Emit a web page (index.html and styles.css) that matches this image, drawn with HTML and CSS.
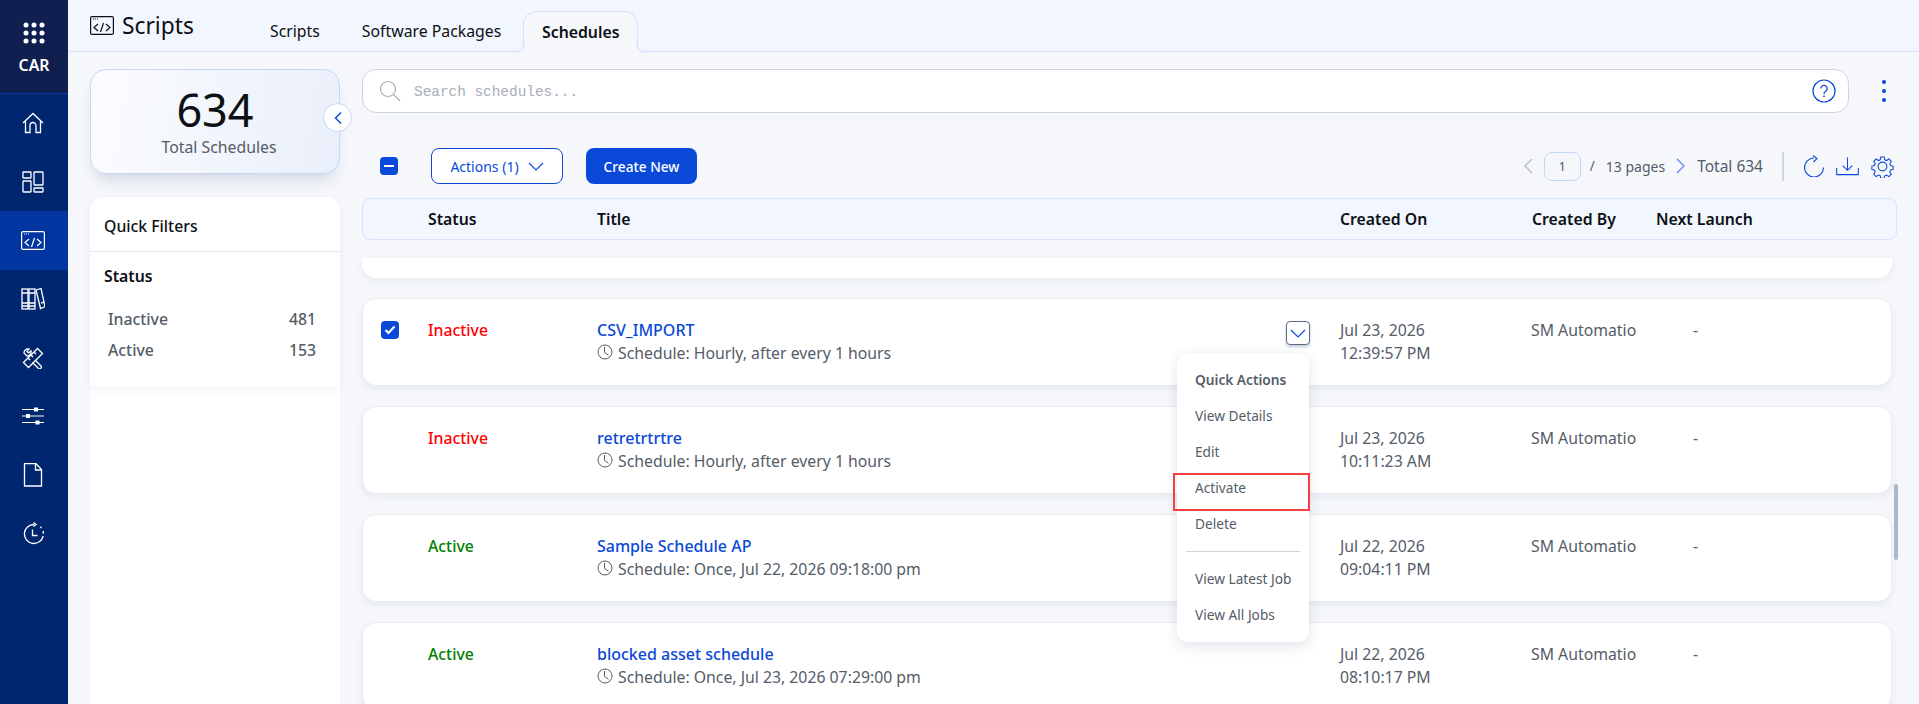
FILE: index.html
```html
<!DOCTYPE html>
<html lang="en">
<head>
  <meta charset="UTF-8" />
  <title>Scripts - Schedules</title>
  <link rel="stylesheet" href="styles.css">
</head>
<body>

<svg class="defs" width="0" height="0">
  <symbol id="code" viewBox="0 0 24 19">
    <rect x="0.6" y="0.6" width="22.8" height="17.8" rx="1.5" fill="none" stroke="currentColor" stroke-width="1.2"/>
    <path d="M3 3h1M5 3h1M7 3h1" stroke="currentColor" stroke-width="1"/>
    <path d="M8 8l-4 3.5 4 3.500M16 8l4 3.500-4 3.500M13.500 7l-3 9" fill="none" stroke="currentColor" stroke-width="1.200"/>
  </symbol>
  <symbol id="clock" viewBox="0 0 16 16">
    <circle cx="8" cy="8" r="7" fill="none" stroke="currentColor" stroke-width="1"/>
    <path d="M7.500 3v5.300l4 3" fill="none" stroke="currentColor" stroke-width="1"/>
  </symbol>
</svg>

<!-- sidebar -->
<aside class="sidebar">
  <div class="brand">
    <svg class="grid-dots" width="22" height="22" viewBox="0 0 22 22" fill="#fff">
      <circle cx="3" cy="3" r="2.500"/><circle cx="11" cy="3" r="2.500"/><circle cx="19" cy="3" r="2.500"/>
      <circle cx="3" cy="11" r="2.500"/><circle cx="11" cy="11" r="2.500"/><circle cx="19" cy="11" r="2.500"/>
      <circle cx="3" cy="19" r="2.500"/><circle cx="11" cy="19" r="2.500"/><circle cx="19" cy="19" r="2.500"/>
    </svg>
    <span>CAR</span>
  </div>
  <nav>
    <div class="nav-item">
      <svg width="22" height="22" viewBox="0 0 22 22" fill="none" stroke="#fff" stroke-width="1.300"><path d="M1 11L11 1.500 21 11M3.500 9.500V20.500H8V13.500a3 3 0 0 1 6 0V20.500H18.500V9.500"/></svg>
    </div>
    <div class="nav-item">
      <svg width="22" height="22" viewBox="0 0 22 22" fill="none" stroke="#fff" stroke-width="1.300"><rect x="1" y="1" width="8" height="6" rx=".5"/><rect x="1" y="10" width="8" height="11" rx=".5"/><rect x="12" y="1" width="9" height="13" rx=".5"/><rect x="12" y="17" width="9" height="4" rx=".5"/></svg>
    </div>
    <div class="nav-item active">
      <svg width="24" height="19"><use href="#code"/></svg>
    </div>
    <div class="nav-item">
      <svg width="24" height="22" viewBox="0 0 24 22" fill="none" stroke="#fff" stroke-width="1.300"><rect x="1" y="1" width="6" height="20"/><rect x="8" y="1" width="6" height="20"/><path d="M15 2l5-1.500 4 18-4.500 2zM1 5h6M8 5h6M1 15h6M8 15h6M1 18h6M8 18h6M20 15l3-.8"/></svg>
    </div>
    <div class="nav-item">
      <svg width="22" height="22" viewBox="0 0 22 22" fill="none" stroke="#fff" stroke-width="1.300"><path d="M1.500 15.500L15.500 1.500l5 5-14 14zM12 5l2 2M9 8l2 2M6 11l2 2"/><path d="M2 6a4 4 0 0 1 5-4L5 4.500l1.500 1.500L9 4a4 4 0 0 1-4 5zM13 13l6 6a1.800 1.800 0 0 1-2.500 2.500l-6-6"/></svg>
    </div>
    <div class="nav-item">
      <svg width="22" height="18" viewBox="0 0 22 18" fill="#fff"><path d="M0 2h22v1H0zM0 8.500h22v1H0zM0 15h22v1H0z"/><rect x="12" y="0.500" width="4" height="4"/><rect x="4" y="7" width="4" height="4"/><rect x="13.500" y="13.500" width="4" height="4"/></svg>
    </div>
    <div class="nav-item">
      <svg width="20" height="24" viewBox="0 0 20 24" fill="none" stroke="#fff" stroke-width="1.300"><path d="M1.500 .7H13L18.500 6.500V23H1.500zM12.500 1V7H18.500"/></svg>
    </div>
    <div class="nav-item">
      <svg width="22" height="23" viewBox="0 0 22 23" fill="none" stroke="#fff" stroke-width="1.300"><path d="M12 2.500a9.500 9.500 0 1 0 9.200 11.500M11.500 .5l2.500 2-2.500 2"/><path d="M21.300 9v2.800M18.300 4.800l1.200 1.200"/><path d="M10.500 7.500v6h5"/></svg>
    </div>
  </nav>
</aside>

<main class="main">
  <header class="topbar">
    <div class="page-title">
      <svg width="24" height="19"><use href="#code"/></svg>
      <h1>Scripts</h1>
    </div>
    <div class="tabs">
      <div class="tab">Scripts</div>
      <div class="tab">Software Packages</div>
      <div class="tab selected">Schedules</div>
    </div>
  </header>

  <div class="content">
    <!-- left column -->
    <section class="left">
      <div class="total-card">
        <div class="total-num">634</div>
        <div class="total-label">Total Schedules</div>
        <button class="collapse">
          <svg width="10" height="14" viewBox="0 0 10 14" fill="none" stroke="#0a49d8" stroke-width="1.500"><path d="M8 1.500L2.500 7 8 12.500"/></svg>
        </button>
      </div>
      <div class="filters">
        <div class="filters-box">
          <div class="filters-head">Quick Filters</div>
          <div class="filters-body">
            <div class="filters-title">Status</div>
            <div class="filter-line"><span>Inactive</span><span>481</span></div>
            <div class="filter-line"><span>Active</span><span>153</span></div>
          </div>
        </div>
      </div>
    </section>

    <!-- right column -->
    <section class="right">
      <div class="search-row">
        <div class="search">
          <svg width="22" height="22" viewBox="0 0 22 22" fill="none" stroke="#a9aeb8" stroke-width="1.200"><circle cx="9" cy="9" r="7.500"/><path d="M14.500 14.500L21 21"/></svg>
          <span class="placeholder">Search schedules...</span>
          <svg width="24" height="24" viewBox="0 0 24 24" fill="none" stroke="#0a49d8" stroke-width="1.200"><circle cx="12" cy="12" r="11"/><path d="M8.800 9.500a3.200 3.200 0 1 1 4.800 2.800c-1 .6-1.600 1.200-1.600 2.700" stroke-width="1.300"/><path d="M12 16.500v1.800" stroke-width="1.500"/></svg>
        </div>
        <div class="kebab"><i></i><i></i><i></i></div>
      </div>

      <div class="toolbar">
        <span class="check"><b></b></span>
        <button class="btn-outline">Actions (1)
          <svg width="16" height="9" viewBox="0 0 16 9" fill="none" stroke="#0a49d8" stroke-width="1.200"><path d="M1 1l7 7 7-7"/></svg>
        </button>
        <button class="btn-primary">Create New</button>
        <div class="pager">
          <svg width="10" height="16" viewBox="0 0 10 16" fill="none" stroke="#b4b9c2" stroke-width="1.300"><path d="M9 1L2 8l7 7"/></svg>
          <span class="page-box">1</span>
          <span class="page-slash">/</span>
          <span class="page-count">13 pages</span>
          <svg class="page-next" width="10" height="16" viewBox="0 0 10 16" fill="none" stroke="#5f8cf0" stroke-width="1.300"><path d="M1 1l7 7-7 7"/></svg>
          <span class="page-total">Total 634</span>
          <span class="sep"></span>
          <svg class="tool" width="20" height="22" viewBox="0 0 20 22" fill="none" stroke="#0a49d8" stroke-width="1.100"><path d="M10 3A9.500 9.500 0 1 0 19.500 12.500M9 .5l4 3-3.500 3.500"/></svg>
          <svg class="tool" width="23" height="20" viewBox="0 0 24 20" fill="none" stroke="#0a49d8" stroke-width="1.100"><path d="M12 1v13M7 9.500l5 5 5-5M.7 12v7h22.600v-7"/></svg>
          <svg class="tool" width="23" height="23" viewBox="0 0 24 24" fill="none" stroke="#0a49d8" stroke-width="1.200"><circle cx="12" cy="12" r="4.500"/><path d="M10 1h4l.6 3.200 2.100.9 2.700-1.800 2.800 2.800-1.800 2.700.9 2.100 3 .6v4l-3 .6-.9 2.100 1.800 2.700-2.800 2.800-2.700-1.800-2.100.9-.6 2.700h-4l-.6-2.700-2.100-.9-2.700 1.800-2.800-2.800 1.800-2.700-.9-2.100-3-.6v-4l3-.6.9-2.100-1.800-2.700 2.800-2.800 2.700 1.800 2.100-.9z" transform="translate(1.200 1.200) scale(.9)"/></svg>
        </div>
      </div>

      <div class="table-head">
        <span></span>
        <span>Status</span>
        <span>Title</span>
        <span>Created On</span>
        <span>Created By</span>
        <span>Next Launch</span>
      </div>

      <div class="rows-wrap">
        <div class="rows">
          <div class="row-stub"></div>

          <div class="row">
            <span class="check-cell"><span class="check"><svg width="12" height="10" viewBox="0 0 12 10" fill="none" stroke="#fff" stroke-width="2.200"><path d="M1.500 5l3 3 6-6.500"/></svg></span></span>
            <span class="st inactive">Inactive</span>
            <div class="title-cell">
              <a>CSV_IMPORT</a>
              <div class="sub"><svg width="16" height="16"><use href="#clock"/></svg>Schedule: Hourly, after every 1 hours</div>
            </div>
            <div class="date">Jul 23, 2026<br>12:39:57 PM</div>
            <div class="by">SM Automatio</div>
            <div class="next">-</div>

            <button class="row-toggle">
              <svg width="16" height="9" viewBox="0 0 16 9" fill="none" stroke="#0a49d8" stroke-width="1.200"><path d="M1 1l7 7 7-7"/></svg>
            </button>
            <div class="menu">
              <div class="menu-head">Quick Actions</div>
              <div class="menu-item">View Details</div>
              <div class="menu-item">Edit</div>
              <div class="menu-item marked">Activate</div>
              <div class="menu-item">Delete</div>
              <hr>
              <div class="menu-item">View Latest Job</div>
              <div class="menu-item">View All Jobs</div>
            </div>
          </div>

          <div class="row">
            <span class="check-cell"></span>
            <span class="st inactive">Inactive</span>
            <div class="title-cell">
              <a>retretrtrtre</a>
              <div class="sub"><svg width="16" height="16"><use href="#clock"/></svg>Schedule: Hourly, after every 1 hours</div>
            </div>
            <div class="date">Jul 23, 2026<br>10:11:23 AM</div>
            <div class="by">SM Automatio</div>
            <div class="next">-</div>
          </div>

          <div class="row">
            <span class="check-cell"></span>
            <span class="st active-st">Active</span>
            <div class="title-cell">
              <a>Sample Schedule AP</a>
              <div class="sub"><svg width="16" height="16"><use href="#clock"/></svg>Schedule: Once, Jul 22, 2026 09:18:00 pm</div>
            </div>
            <div class="date">Jul 22, 2026<br>09:04:11 PM</div>
            <div class="by">SM Automatio</div>
            <div class="next">-</div>
          </div>

          <div class="row">
            <span class="check-cell"></span>
            <span class="st active-st">Active</span>
            <div class="title-cell">
              <a>blocked asset schedule</a>
              <div class="sub"><svg width="16" height="16"><use href="#clock"/></svg>Schedule: Once, Jul 23, 2026 07:29:00 pm</div>
            </div>
            <div class="date">Jul 22, 2026<br>08:10:17 PM</div>
            <div class="by">SM Automatio</div>
            <div class="next">-</div>
          </div>
        </div>
        <div class="scroll-thumb"></div>
      </div>
    </section>
  </div>
</main>

</body>
</html>
```

FILE: styles.css
```css
:root {
  --primary: #0a49d8;
  --navy: #00266f;
  --page: #f5f7fa;
  --head: #f2f6ff;
  --line: #d6e3fb;
  --text: #0c0f14;
  --muted: #545c68;
}

* {
  box-sizing: border-box;
}

html, body {
  height: 100%;
}

body {
  margin: 0;
  display: flex;
  height: 704px;
  overflow: hidden;
  font-family: "Noto Sans", Arial, sans-serif;
  font-size: 15.8px;
  color: var(--text);
  background: var(--page);
}

button {
  font-family: inherit;
  cursor: pointer;
}

.defs {
  position: absolute;
}

/* sidebar */
.sidebar {
  width: 68px;
  flex: none;
  background: var(--navy);
  color: #fff;
}

.brand {
  height: 94px;
  background: #0f1f50;
  border-bottom: 1px solid #0a3aa0;
  display: flex;
  flex-direction: column;
  align-items: center;
  padding-top: 22px;
  gap: 10px;
  font-size: 15.8px;
  font-weight: 600;
}

.nav-item {
  height: 58.6px;
  padding-right: 3px;
  display: flex;
  align-items: center;
  justify-content: center;
}

.nav-item.active {
  background: #0335a0;
}

/* top bar */
.main {
  flex: 1;
  min-width: 0;
  display: flex;
  flex-direction: column;
}

.topbar {
  height: 52px;
  flex: none;
  display: flex;
  background: var(--head);
  border-bottom: 1px solid var(--line);
  padding-left: 22px;
}

.page-title {
  width: 180px;
  display: flex;
  align-items: center;
  gap: 8px;
  height: 51px;
  padding-bottom: 1px;
}

.page-title h1 {
  margin: 0;
  font-size: 22.8px;
  font-weight: 400;
}

.tabs {
  display: flex;
  align-items: flex-end;
  height: 52px;
}

.tab {
  height: 42px;
  margin-bottom: -1px;
  padding: 0 22px 0 0;
  margin-right: 20px;
  line-height: 41px;
}

.tab.selected {
  position: relative;
  width: 115px;
  margin-right: 0;
  margin-left: -20px;
  padding: 0;
  text-align: center;
  font-weight: 600;
  background: var(--page);
  border: 1px solid var(--line);
  border-bottom: 1px solid var(--page);
  border-radius: 14px 14px 0 0;
}

.tab.selected::before,
.tab.selected::after {
  content: "";
  position: absolute;
  bottom: -1px;
  width: 10px;
  height: 10px;
  border-bottom: 1px solid var(--line);
}

.tab.selected::before {
  left: -10px;
  border-right: 1px solid var(--line);
  border-bottom-right-radius: 10px;
  box-shadow: 4px 4px 0 4px var(--page);
  clip-path: inset(0 0 0 0);
}

.tab.selected::after {
  right: -10px;
  border-left: 1px solid var(--line);
  border-bottom-left-radius: 10px;
  box-shadow: -4px 4px 0 4px var(--page);
  clip-path: inset(0 0 0 0);
}

/* content columns */
.content {
  flex: 1;
  min-height: 0;
  display: flex;
  padding: 17px 0 0 22px;
}

.left {
  width: 250px;
  flex: none;
  display: flex;
  flex-direction: column;
  gap: 23px;
}

.total-card {
  position: relative;
  height: 105px;
  flex: none;
  text-align: center;
  border: 1px solid #c5d8fb;
  border-radius: 16px;
  background: linear-gradient(100deg, #fbfcfe, #e9effa);
  box-shadow: 0 10px 16px -6px rgba(40, 60, 100, 0.2);
  padding-top: 13px;
}

.total-num {
  font-size: 45px;
  line-height: 54px;
}

.total-label {
  line-height: 20px;
  color: var(--muted);
  padding-left: 8px;
}

.collapse {
  position: absolute;
  right: -13px;
  top: 33px;
  width: 29px;
  height: 29px;
  padding: 0;
  border-radius: 50%;
  border: 1px solid #c5d8fb;
  background: #fff;
  display: flex;
  align-items: center;
  justify-content: center;
}

.filters {
  flex: 1;
  background: #fff;
  border-radius: 14px 14px 0 0;
}

.filters-box {
  height: 189px;
  border-radius: 14px 14px 0 0;
  box-shadow: 0 4px 8px rgba(40, 60, 100, 0.06);
}

.filters-head {
  height: 55px;
  line-height: 58px;
  padding-left: 14px;
  font-weight: 500;
  border-bottom: 1px solid #e6e8ec;
}

.filters-body {
  padding: 14px 14px 0;
}

.filters-title {
  font-weight: 600;
  line-height: 20px;
  margin-bottom: 18px;
}

.filter-line {
  display: flex;
  justify-content: space-between;
  padding: 0 10px 0 4px;
  line-height: 31px;
  font-weight: 500;
  color: var(--muted);
}

/* right column */
.right {
  flex: 1;
  min-width: 0;
  margin-left: 22px;
  display: flex;
  flex-direction: column;
}

.search-row {
  display: flex;
  align-items: center;
  height: 44px;
  flex: none;
}

.search {
  width: 1487px;
  height: 44px;
  display: flex;
  align-items: center;
  gap: 13px;
  padding: 0 12px 0 16px;
  background: #fff;
  border: 1px solid #cfd4de;
  border-radius: 14px;
}

.placeholder {
  flex: 1;
  padding-top: 1px;
  font-family: "Liberation Mono", monospace;
  font-size: 14.4px;
  color: #a9aeb8;
}

.kebab {
  width: 4px;
  margin-left: 33px;
  display: flex;
  flex-direction: column;
  gap: 5px;
}

.kebab i {
  width: 4px;
  height: 4px;
  border-radius: 50%;
  background: var(--primary);
}

.toolbar {
  height: 36px;
  margin-top: 35px;
  flex: none;
  display: flex;
  align-items: center;
  padding-left: 18px;
}

.check {
  width: 18px;
  height: 18px;
  flex: none;
  border-radius: 4px;
  background: var(--primary);
  display: flex;
  align-items: center;
  justify-content: center;
}

.check b {
  width: 10px;
  height: 2px;
  background: #fff;
}

.btn-outline {
  width: 132px;
  height: 36px;
  margin-left: 33px;
  border: 1px solid var(--primary);
  border-radius: 8px;
  background: #fff;
  color: var(--primary);
  font-size: 14px;
  display: flex;
  align-items: center;
  justify-content: center;
  gap: 9px;
}

.btn-primary {
  width: 111px;
  height: 36px;
  margin-left: 23px;
  border: none;
  border-radius: 8px;
  background: var(--primary);
  color: #fff;
  font-size: 13.7px;
  font-weight: 500;
}

.pager {
  margin-left: auto;
  margin-right: 25px;
  display: flex;
  align-items: center;
  color: var(--muted);
}

.page-box {
  width: 37px;
  height: 29px;
  margin-left: 11px;
  border: 1px solid #c5d8fb;
  border-radius: 8px;
  text-align: center;
  font-size: 13px;
  line-height: 27px;
}

.page-slash {
  margin-left: 9px;
  font-size: 13.500px;
}

.page-count {
  margin-left: 11px;
  font-size: 14px;
}

.page-next {
  margin-left: 11px;
}

.page-total {
  margin-left: 11px;
  font-size: 15.500px;
}

.sep {
  width: 2px;
  height: 29px;
  background: #cfd4de;
  margin: 0 20px 0 19px;
}

.tool {
  margin-right: 12px;
}

.tool:last-child {
  margin-right: 0;
}

.table-head,
.row {
  display: grid;
  grid-template-columns: 65px 169px 743px 192px 124px 1fr;
}

.table-head {
  height: 42px;
  margin-top: 14px;
  flex: none;
  width: 1535px;
  align-items: center;
  font-weight: 600;
  background: var(--head);
  border: 1px solid var(--line);
  border-radius: 8px;
}

.rows-wrap {
  position: relative;
  flex: 1;
  min-height: 0;
  margin-top: 18px;
}

.rows {
  width: 1530px;
  height: 100%;
  display: flex;
  flex-direction: column;
  gap: 20px;
}

.row-stub {
  height: 20px;
  flex: none;
  background: #fff;
  border-radius: 0 0 14px 14px;
  box-shadow: 0 2px 6px rgba(40, 60, 100, 0.08);
}

.row {
  position: relative;
  height: 88px;
  flex: none;
  padding-top: 20px;
  background: #fff;
  border: 1px solid #eaedf2;
  border-radius: 14px;
  box-shadow: 0 3px 6px rgba(40, 60, 100, 0.07);
}

.check-cell {
  padding: 2px 0 0 18px;
}

.st {
  font-weight: 500;
  line-height: 23px;
}

.inactive {
  color: #ff0000;
}

.active-st {
  color: #008000;
}

.title-cell a {
  display: block;
  font-size: 16px;
  font-weight: 500;
  line-height: 23px;
  color: var(--primary);
}

.sub {
  display: flex;
  align-items: center;
  gap: 5px;
  line-height: 23px;
  color: var(--muted);
}

.sub svg {
  flex: none;
  margin-top: -3px;
}

.date {
  line-height: 23px;
  color: var(--muted);
}

.by {
  margin-left: -1px;
  line-height: 23px;
  white-space: nowrap;
  color: var(--muted);
}

.next {
  padding-left: 37px;
  line-height: 23px;
  color: var(--muted);
}

.row-toggle {
  position: absolute;
  left: 923px;
  top: 22px;
  width: 24px;
  height: 24px;
  padding: 0;
  background: #fff;
  border: 1px solid #5a6b85;
  border-radius: 4px;
  box-shadow: 0 2px 3px rgba(40, 60, 100, 0.25);
  display: flex;
  align-items: center;
  justify-content: center;
}

.menu {
  position: absolute;
  left: 814px;
  top: 54px;
  z-index: 5;
  width: 132px;
  height: 289px;
  padding: 9px 0 0 18px;
  background: #fff;
  border-radius: 10px;
  box-shadow: 0 4px 14px rgba(40, 60, 100, 0.14);
  font-size: 13.700px;
  color: var(--muted);
}

.menu-head {
  height: 36px;
  line-height: 36px;
  font-weight: 600;
}

.menu-item {
  height: 36px;
  line-height: 36px;
}

.menu-item.marked {
  position: relative;
}

.menu-item.marked::after {
  content: "";
  position: absolute;
  left: -22px;
  right: -1px;
  top: 3px;
  height: 34px;
  border: 2px solid #f44040;
}

.menu hr {
  width: 114px;
  margin: 9px 0 9px -9px;
  border: none;
  border-top: 1px solid #cfd4de;
}

.scroll-thumb {
  position: absolute;
  left: 1532px;
  top: 226px;
  width: 4px;
  height: 76px;
  border-radius: 2px;
  background: #a9bac9;
}
```
